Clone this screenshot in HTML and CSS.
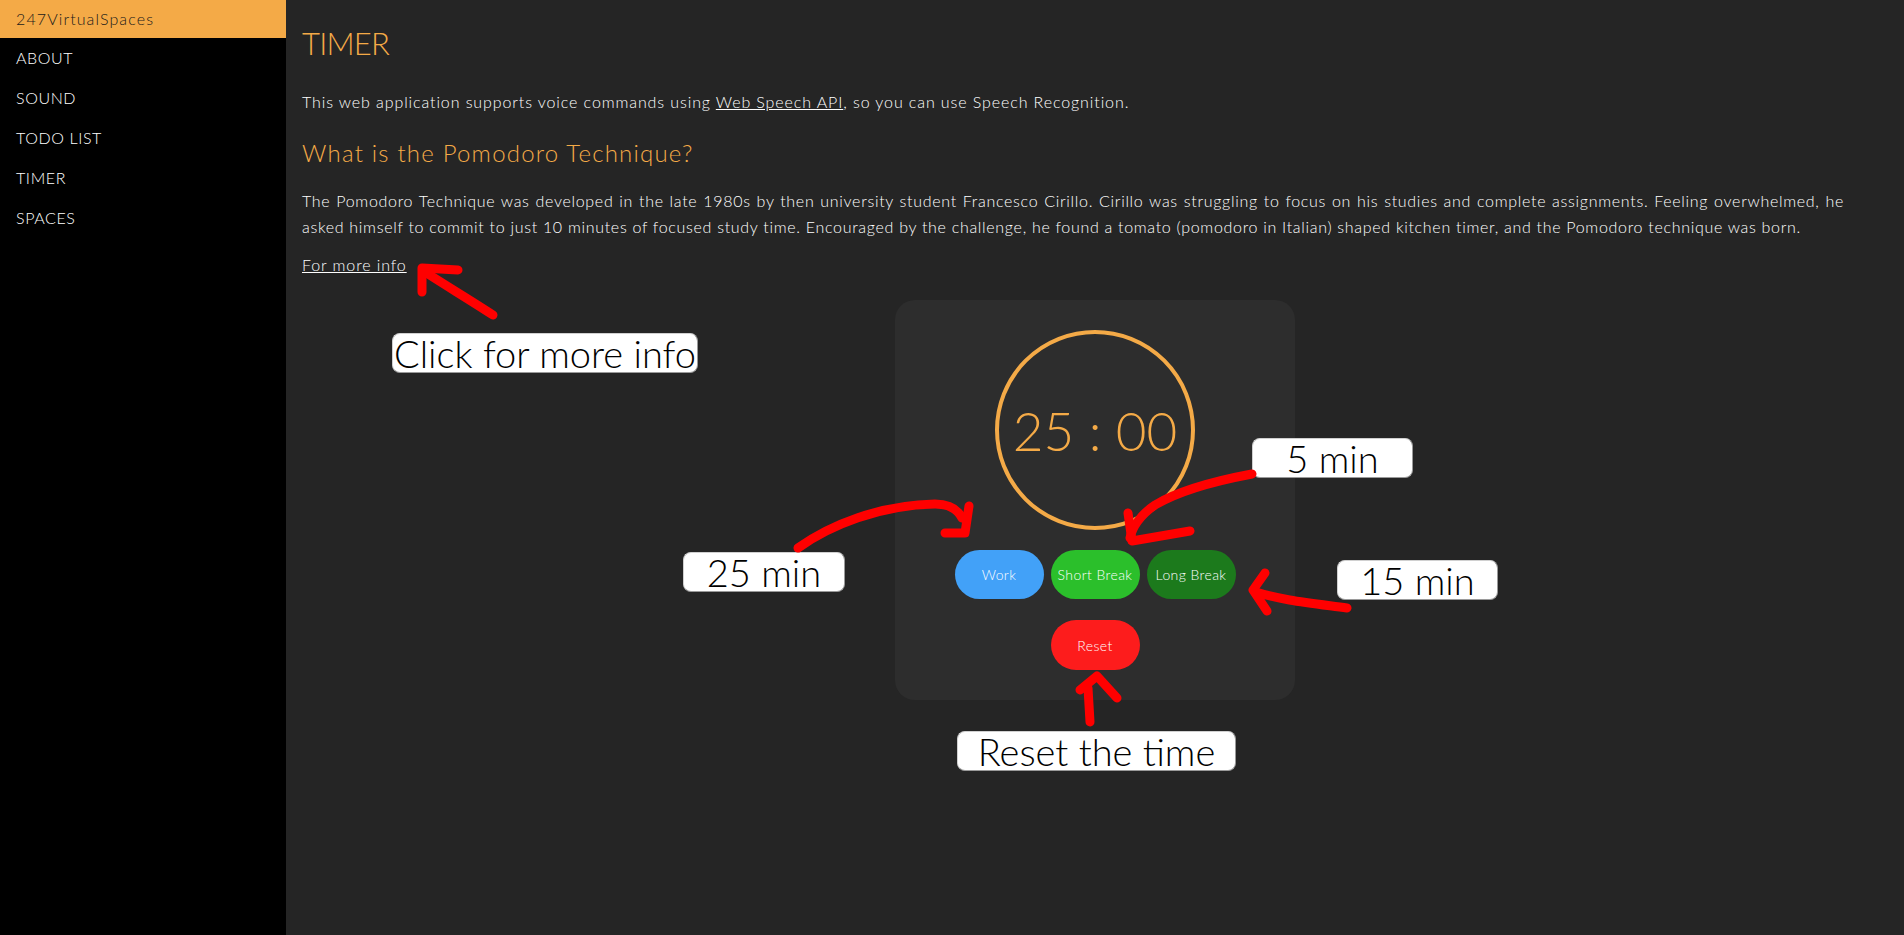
FILE: index.html
```html
<!DOCTYPE html>
<html lang="en">
<head>
<meta charset="utf-8">
<title>247VirtualSpaces - Timer</title>
<link rel="stylesheet" href="styles.css">
</head>
<body>
<div class="layout">
  <nav class="sidebar">
    <div class="brand">247VirtualSpaces</div>
    <a class="nav-item" href="#">ABOUT</a>
    <a class="nav-item" href="#">SOUND</a>
    <a class="nav-item" href="#">TODO LIST</a>
    <a class="nav-item" href="#">TIMER</a>
    <a class="nav-item" href="#">SPACES</a>
  </nav>
  <main class="main">
    <div class="text">
      <h1 class="title">TIMER</h1>
      <p class="intro">This web application supports voice commands using <a href="#">Web Speech API</a>, so you can use Speech Recognition.</p>
      <h2 class="subtitle">What is the Pomodoro Technique?</h2>
      <p class="body">The Pomodoro Technique was developed in the late 1980s by then university student Francesco Cirillo. Cirillo was struggling to focus on his studies and complete assignments. Feeling overwhelmed, he asked himself to commit to just 10 minutes of focused study time. Encouraged by the challenge, he found a tomato (pomodoro in Italian) shaped kitchen timer, and the Pomodoro technique was born.</p>
      <p class="more"><a href="#">For more info</a></p>
    </div>
    <div class="timer-wrap">
      <section class="timer-card">
        <div class="dial"><span class="time">25 : 00</span></div>
        <div class="modes">
          <button class="btn work">Work</button>
          <button class="btn short">Short Break</button>
          <button class="btn long">Long Break</button>
        </div>
        <button class="btn reset">Reset</button>
      </section>
    </div>
  </main>
</div>

<div class="note note-info">Click for more info</div>
<div class="note note-work">25 min</div>
<div class="note note-short">5 min</div>
<div class="note note-long">15 min</div>
<div class="note note-reset">Reset the time</div>

<svg class="arrows" width="1904" height="935" viewBox="0 0 1904 935" fill="none" stroke="#ff0000" stroke-width="9" stroke-linecap="round" stroke-linejoin="round">
  <path d="M493 315 C470 300 445 285 425 272"/>
  <path d="M422 292 L422 268 L458 270"/>
  <path d="M798 548 C830 525 880 505 935 504 C950 504 958 510 962 518"/>
  <path d="M969 506 L965 533 L945 533"/>
  <path d="M1252 474 C1220 480 1180 490 1155 505 C1140 515 1132 528 1130 538"/>
  <path d="M1128 513 L1132 541 L1190 531"/>
  <path d="M1347 608 C1310 603 1280 600 1256 592"/>
  <path d="M1265 573 L1253 590 L1267 611"/>
  <path d="M1090 722 L1088 688"/>
  <path d="M1080 690 L1097 676 L1117 698"/>
</svg>
</body>
</html>
```

FILE: styles.css
```css
* { box-sizing: border-box; }
html, body {
  margin: 0;
  padding: 0;
  height: 100%;
}
body {
  position: relative;
  background: #252525;
  color: #ffffff;
  font-family: "Lato", "Noto Sans", sans-serif;
  font-weight: 300;
  overflow: hidden;
}
.layout {
  display: flex;
  min-height: 935px;
}
.sidebar {
  width: 286px;
  flex: none;
  background: #000000;
  display: flex;
  flex-direction: column;
}
.brand {
  height: 38px;
  line-height: 38px;
  padding-left: 16px;
  background: #f4aa47;
  color: #1a1a1a;
  font-size: 16px;
  font-weight: 300;
  letter-spacing: 1.1px;
}
.nav-item {
  height: 40px;
  line-height: 40px;
  padding-left: 16px;
  color: #ffffff;
  text-decoration: none;
  font-size: 16px;
  font-weight: 300;
  letter-spacing: 0.6px;
}
.main {
  flex: 1;
  padding: 0 16px;
}
.text {
  margin-right: 44px;
}
.title {
  margin: 24px 0 0;
  font-size: 31px;
  line-height: 38px;
  font-weight: 300;
  letter-spacing: -0.8px;
  color: #f4aa47;
}
.intro {
  margin: 27px 0 0;
  font-size: 16px;
  line-height: 25px;
  letter-spacing: 0.9px;
}
.intro a, .more a {
  color: #ffffff;
}
.subtitle {
  margin: 24px 0 0;
  font-size: 24px;
  line-height: 29px;
  font-weight: 300;
  letter-spacing: 1.2px;
  color: #f4aa47;
}
.body {
  margin: 21px 0 0;
  font-size: 16px;
  line-height: 25.5px;
  letter-spacing: 0.7px;
  text-align: justify;
}
.more {
  margin: 13px 0 0;
  font-size: 16px;
  line-height: 25px;
  letter-spacing: 0.9px;
}
.timer-wrap {
  display: flex;
  justify-content: center;
  margin-top: 23px;
}
.timer-card {
  width: 400px;
  height: 400px;
  background: #2d2d2d;
  border-radius: 20px;
  padding-top: 30px;
  display: flex;
  flex-direction: column;
  align-items: center;
}
.dial {
  width: 200px;
  height: 200px;
  border: 4px solid #f4aa47;
  border-radius: 50%;
  display: flex;
  align-items: center;
  justify-content: center;
}
.time {
  color: #f4aa47;
  font-size: 53px;
  font-weight: 300;
  white-space: pre;
}
.modes {
  display: flex;
  gap: 7px;
  margin-top: 20px;
}
.btn {
  width: 89px;
  height: 49px;
  border: none;
  border-radius: 25px;
  color: #ffffff;
  font-family: inherit;
  font-weight: 300;
  font-size: 14px;
  letter-spacing: 0.4px;
  padding: 0;
}
.work { background: #42a1f8; }
.short { background: #2bbf2b; }
.long { background: #1c7a1c; }
.reset {
  background: #fd1c1c;
  height: 50px;
  margin-top: 21px;
}
.note {
  position: absolute;
  background: #ffffff;
  color: #000000;
  border: 1px solid #9a9a9a;
  border-top-color: #d0d0d0;
  border-left-color: #d0d0d0;
  border-radius: 8px;
  font-family: "Lato", "Noto Sans", sans-serif;
  font-weight: 300;
  font-size: 38px;
  line-height: 38px;
  height: 40px;
  text-align: center;
  white-space: nowrap;
}
.note-info { left: 392px; top: 333px; width: 306px; }
.note-work { left: 683px; top: 552px; width: 162px; }
.note-short { left: 1252px; top: 438px; width: 161px; }
.note-long { left: 1337px; top: 560px; width: 161px; }
.note-reset { left: 957px; top: 731px; width: 279px; }
.arrows {
  position: absolute;
  left: 0;
  top: 0;
  pointer-events: none;
}
```
